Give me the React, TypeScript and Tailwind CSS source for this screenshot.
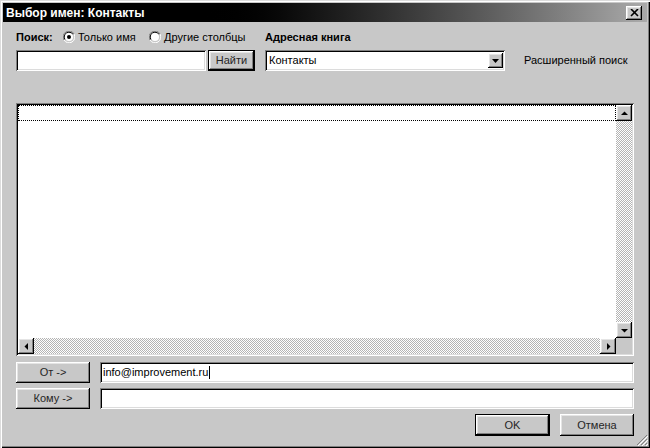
import React from 'react';

const raised =
  'shadow-[inset_-1px_-1px_0_#000000,inset_1px_1px_0_#ffffff,inset_-2px_-2px_0_#808080,inset_2px_2px_0_#e4e4e4]';
const sunken =
  'shadow-[inset_1px_1px_0_#808080,inset_-1px_-1px_0_#ffffff,inset_2px_2px_0_#000000,inset_-2px_-2px_0_#dcdcdc]';
const checker =
  'bg-[image:repeating-conic-gradient(#ffffff_0_25%,#b4b4b4_0_50%)] bg-[length:2px_2px]';

function Radio({ checked }: { checked?: boolean }) {
  return (
    <svg width="12" height="12" viewBox="0 0 12 12" className="shrink-0">
      <path d="M11 3 A5.5 5.5 0 0 0 3 1 A5.5 5.5 0 0 0 1 9" fill="none" stroke="#808080" />
      <path d="M10 3.5 A4.5 4.5 0 0 0 3.5 2 A4.5 4.5 0 0 0 2 8.5" fill="none" stroke="#000" />
      <path d="M1 9 A5.5 5.5 0 0 0 11 3" fill="none" stroke="#fff" />
      <circle cx="6" cy="6" r="4" fill="#fff" />
      {checked && <circle cx="6" cy="6" r="2" fill="#000" />}
    </svg>
  );
}

function Arrow({ dir }: { dir: 'up' | 'down' | 'left' | 'right' }) {
  const pts = {
    up: '4,9 11,9 7.5,5.5',
    down: '4,6 11,6 7.5,9.5',
    left: '9,4 9,11 5.5,7.5',
    right: '6,4 6,11 9.5,7.5',
  }[dir];
  return (
    <svg width="15" height="15" viewBox="0 0 15 15">
      <polygon points={pts} fill="#000" />
    </svg>
  );
}

function ScrollBtn({ dir }: { dir: 'up' | 'down' | 'left' | 'right' }) {
  return (
    <div className={`flex h-[16px] w-[16px] shrink-0 items-center justify-center bg-[#c8c8c8] ${raised}`}>
      <Arrow dir={dir} />
    </div>
  );
}

function Btn({ children, def, w }: { children: React.ReactNode; def?: boolean; w: string }) {
  return (
    <div
      className={`flex h-full items-center justify-center bg-[#c8c8c8] font-normal text-[#262626] ${w} ${
        def ? 'border border-black' : ''
      } ${raised}`}
    >
      {children}
    </div>
  );
}

export default function App() {
  return (
    <div className="relative h-[448px] w-[650px] overflow-hidden bg-[#c8c8c8] font-['Liberation_Sans',Arial,sans-serif] text-[11px] text-black shadow-[inset_1px_1px_0_#dcdcdc,inset_2px_2px_0_#ffffff,inset_-1px_-1px_0_#000000,inset_-2px_-2px_0_#808080]">
      {/* title bar */}
      <div className="mx-[3px] mt-[3px] flex h-[19px] items-center justify-between bg-linear-to-r from-black from-30% to-[#ababab] pl-[3px] pr-[5px]">
        <span className="text-[12px] font-bold text-white">Выбор имен: Контакты</span>
        <div className={`flex h-[14px] w-[16px] items-center justify-center bg-[#c8c8c8] ${raised}`}>
          <svg width="9" height="8" viewBox="0 0 9 8">
            <path d="M1 0 L8 7 M8 0 L1 7" stroke="#000" strokeWidth="1.6" />
          </svg>
        </div>
      </div>

      <div className="flex flex-col px-[16px]">
        {/* search options */}
        <div className="mt-[7px] flex h-[16px] items-center">
          <span className="w-[47px] font-bold">Поиск:</span>
          <div className="flex w-[86px] items-center gap-[3px]">
            <Radio checked />
            <span>Только имя</span>
          </div>
          <div className="flex w-[116px] items-center gap-[3px]">
            <Radio />
            <span>Другие столбцы</span>
          </div>
          <span className="font-bold">Адресная книга</span>
        </div>

        {/* search inputs */}
        <div className="mt-[5px] flex h-[21px] items-center">
          <div className={`h-[21px] w-[190px] bg-white ${sunken}`} />
          <div className="ml-[2px] h-[21px]">
            <Btn def w="w-[47px]">Найти</Btn>
          </div>
          <div className={`ml-[10px] flex h-[21px] w-[240px] items-center justify-between bg-white pl-[4px] pr-[2px] ${sunken}`}>
            <span>Контакты</span>
            <div className={`flex h-[15px] w-[15px] items-center justify-center bg-[#c8c8c8] ${raised}`}>
              <svg width="7" height="4" viewBox="0 0 7 4">
                <polygon points="0,0 7,0 3.5,4" fill="#000" />
              </svg>
            </div>
          </div>
          <span className="ml-[19px]">Расширенный поиск</span>
        </div>

        {/* results list */}
        <div className={`mt-[32px] flex h-[253px] flex-col bg-white p-[2px] ${sunken}`}>
          <div className="flex min-h-0 flex-1">
            <div className="flex-1">
              <div className="h-[16px] border border-dotted border-black" />
            </div>
            <div className="flex w-[16px] flex-col">
              <ScrollBtn dir="up" />
              <div className={`flex-1 ${checker}`} />
              <ScrollBtn dir="down" />
            </div>
          </div>
          <div className="flex h-[16px]">
            <ScrollBtn dir="left" />
            <div className={`flex-1 ${checker}`} />
            <ScrollBtn dir="right" />
            <div className="w-[16px] bg-[#c8c8c8]" />
          </div>
        </div>

        {/* from / to */}
        <div className="mt-[6px] flex h-[21px]">
          <Btn w="w-[74px]">От -&gt;</Btn>
          <div className={`ml-[10px] flex flex-1 items-center bg-white pl-[3px] ${sunken}`}>
            <span>info@improvement.ru</span>
            <span className="ml-[1px] h-[13px] w-[1px] bg-black" />
          </div>
        </div>
        <div className="mt-[5px] flex h-[21px]">
          <Btn w="w-[74px]">Кому -&gt;</Btn>
          <div className={`ml-[10px] flex-1 bg-white ${sunken}`} />
        </div>

        {/* dialog buttons */}
        <div className="mt-[5px] flex h-[22px] justify-end gap-[10px]">
          <Btn def w="w-[75px]">OK</Btn>
          <Btn w="w-[74px]">Отмена</Btn>
        </div>
      </div>

      {/* resize grip */}
      <svg width="12" height="12" viewBox="0 0 12 12" className="absolute bottom-[2px] right-[2px]">
        <path d="M11 1 L1 11 M11 5 L5 11 M11 9 L9 11" stroke="#808080" strokeWidth="1" />
        <path d="M12 2 L2 12 M12 6 L6 12 M12 10 L10 12" stroke="#ffffff" strokeWidth="1" />
      </svg>
    </div>
  );
}
